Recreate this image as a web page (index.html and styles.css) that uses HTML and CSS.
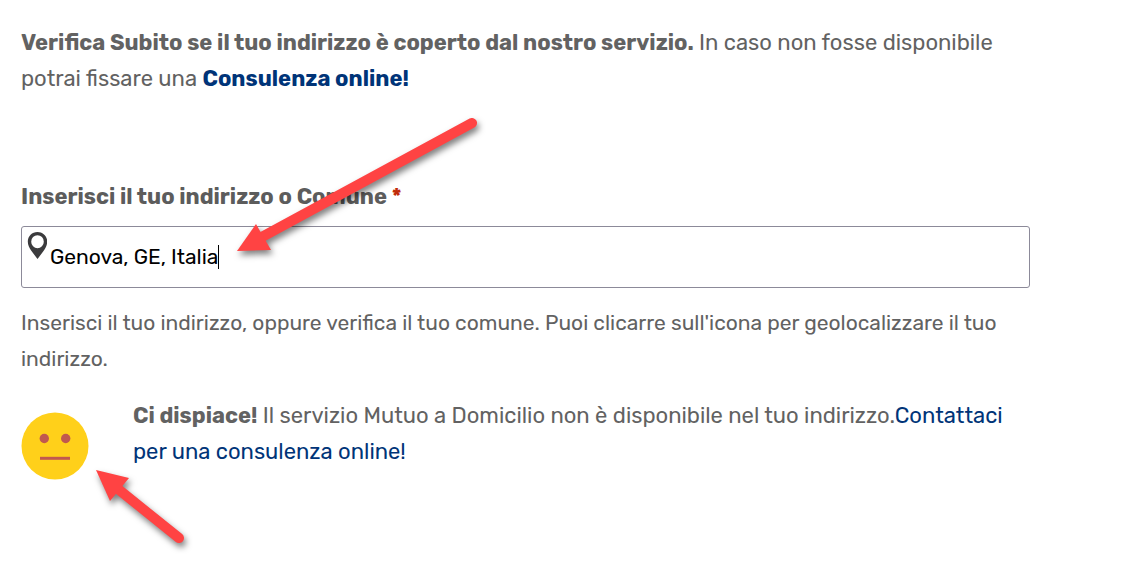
FILE: index.html
```html
<!DOCTYPE html>
<html lang="it">

<head>
  <meta charset="UTF-8" />
  <meta name="viewport" content="width=device-width, initial-scale=1.0" />
  <title>Mutuo a Domicilio - Verifica indirizzo</title>
  <link rel="stylesheet" href="styles.css">
</head>

<body>
  <main class="page">
    <p class="intro"><strong>Verifica Subito se il tuo indirizzo è coperto dal nostro servizio.</strong> In caso non fosse disponibile potrai fissare una <a class="bold" href="#consulenza">Consulenza online!</a></p>

    <form class="address-form">
      <label class="label" for="address">Inserisci il tuo indirizzo o Comune <span class="required">*</span></label>
      <div class="field">
        <input class="address" id="address" type="text" value="Genova, GE, Italia" aria-describedby="help" required>
        <svg class="pin" viewBox="0 0 20 27" aria-hidden="true">
          <path fill="#3b3b3d" fill-rule="evenodd" d="M10.500 0C5 0 .8 4.200.8 9.600c0 3.500 1.400 6 3.500 9.200L10.500 27l6.200-8.200c2.100-3.200 3.500-5.700 3.500-9.200C20.200 4.200 16 0 10.500 0zM10.500 3.200a6.300 6.500 0 1 1 0 13 6.300 6.500 0 0 1 0-13z" />
        </svg>
        <span class="caret"></span>
      </div>
      <p class="help" id="help">Inserisci il tuo indirizzo, oppure verifica il tuo comune. Puoi clicarre sull'icona per geolocalizzare il tuo indirizzo.</p>
    </form>

    <div class="result">
      <svg class="face" viewBox="0 0 68 68" aria-hidden="true">
        <circle cx="34" cy="34" r="33.500" fill="#ffd01a" />
        <circle cx="23.300" cy="26.500" r="4.700" fill="#c1584f" />
        <circle cx="44.700" cy="26.500" r="4.700" fill="#c1584f" />
        <path d="M19 46.300h30" stroke="#c1584f" stroke-width="3" />
      </svg>
      <p class="message"><strong>Ci dispiace!</strong> Il servizio Mutuo a Domicilio non è disponibile nel tuo indirizzo.<a href="#contatti">Contattaci per una consulenza online!</a></p>
    </div>
  </main>

  <svg class="arrows" width="500" height="560" viewBox="0 0 500 560" aria-hidden="true">
    <g class="arrow">
      <path d="M472 123L260 238" stroke-width="10" stroke-linecap="round" />
      <path class="head" d="M237 251L256 224L271 250z" />
    </g>
    <g class="arrow">
      <path d="M179 538L118 489" stroke-width="10" stroke-linecap="round" />
      <path class="head" d="M96 470L129 478L110 501z" />
    </g>
  </svg>
</body>

</html>
```
FILE: styles.css
```css
body {
  position: relative;
  min-height: 100vh;
  background: #fff;
  color: #626262;
  font-family: Rubik, Roboto, sans-serif;
  font-size: 22px;
  line-height: 36px;
  margin: 0;
}

p {
  margin: 0;
}

a {
  color: #003478;
  text-decoration: none;
}

.bold {
  font-weight: 700;
}

.page {
  padding: 25px 95px 25px 21px;
}

.intro {
  margin-bottom: 82px;
}

.label {
  display: block;
  color: #5c5c5c;
  font-weight: 700;
  margin-bottom: 11px;
}

.required {
  color: #c02b0a;
}

.field {
  position: relative;
  display: flex;
}

.address {
  box-sizing: border-box;
  width: 100%;
  height: 62px;
  padding: 0 16px 2px 28px;
  border: 1px solid #8c8a99;
  border-radius: 3px;
  background: #fff;
  color: #000;
  font-family: inherit;
  font-size: 21px;
  outline: none;
}

.pin {
  position: absolute;
  top: 6px;
  left: 6px;
  width: 20px;
  height: 27px;
}

.caret {
  position: absolute;
  top: 19px;
  left: 197px;
  width: 1px;
  height: 24px;
  background: #000;
}

.help {
  margin-top: 17px;
  font-size: 21px;
}

.result {
  display: flex;
  align-items: flex-start;
  gap: 44px;
  margin-top: 21px;
}

.face {
  flex: none;
  width: 68px;
  height: 68px;
  margin-top: 14px;
}

.arrows {
  position: absolute;
  top: 0;
  left: 0;
  pointer-events: none;
}

.arrow {
  stroke: #ff4343;
  filter: drop-shadow(2px 4px 3px rgba(0, 0, 0, 0.5));
}

.head {
  fill: #ff4343;
  stroke: none;
}
```
